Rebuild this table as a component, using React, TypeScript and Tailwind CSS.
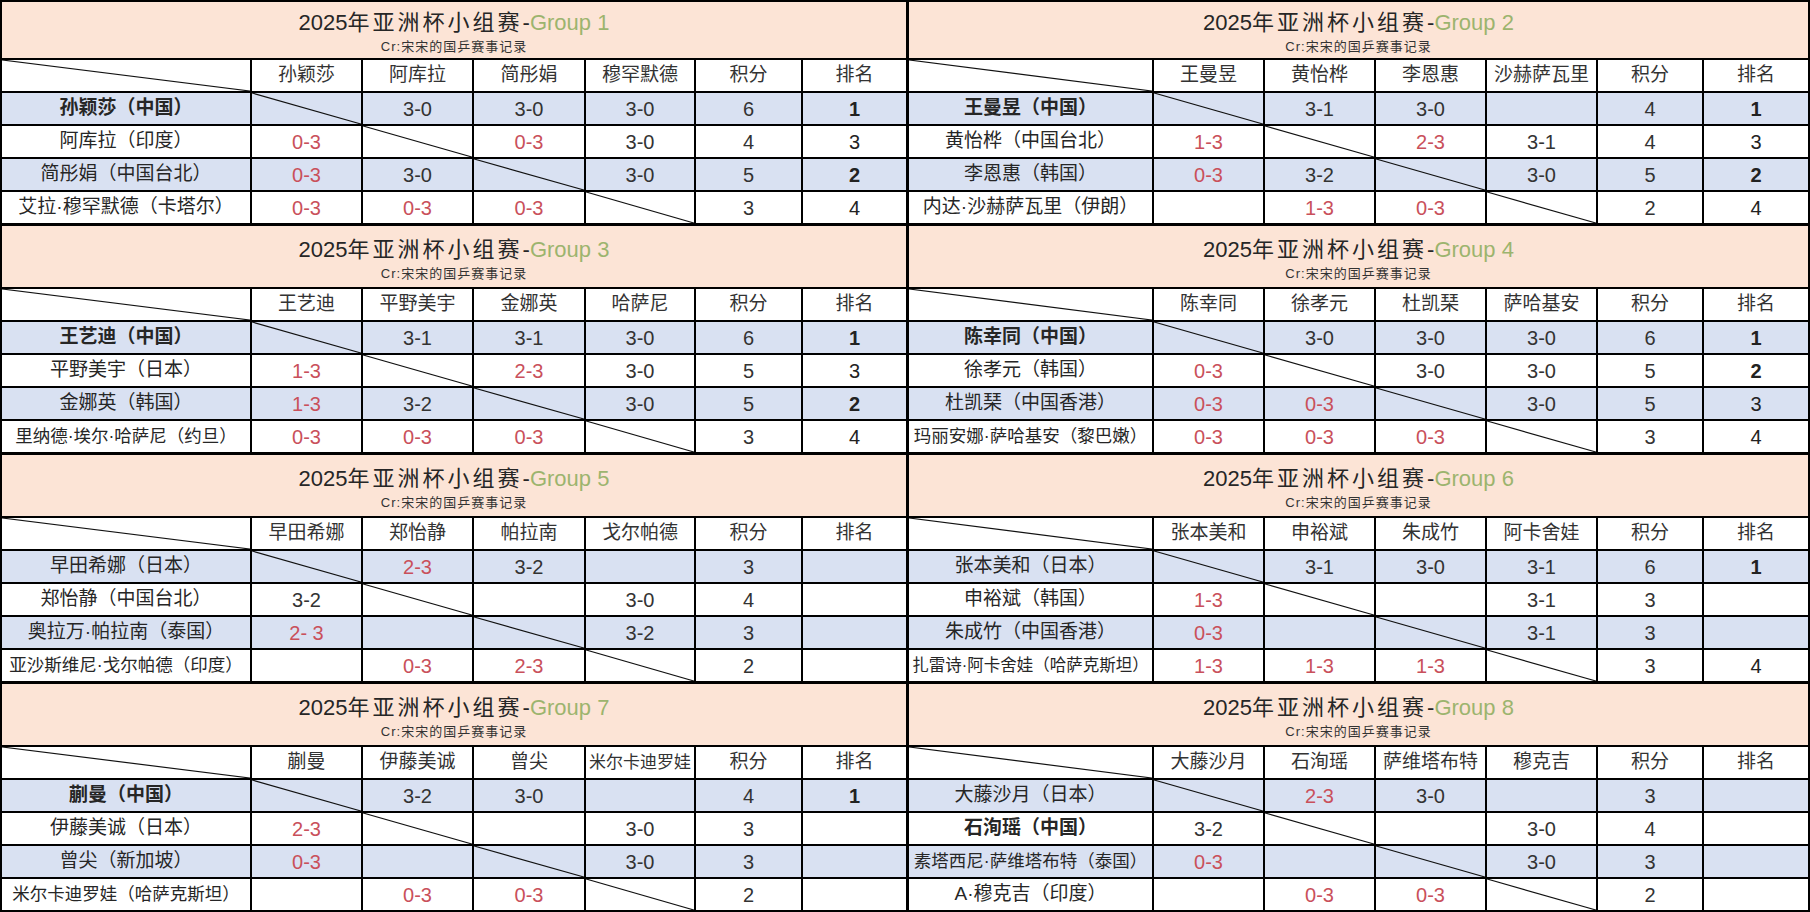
type Row = {
  name: string
  bold?: boolean
  cells: string[]
  pts: string
  rank: string
  rankBold?: boolean
}

type Group = { n: number; cols: string[]; rows: Row[] }

const groups: Group[] = [
  {
    n: 1,
    cols: ['孙颖莎', '阿库拉', '简彤娟', '穆罕默德'],
    rows: [
      { name: '孙颖莎（中国）', bold: true, cells: ['', '3-0', '3-0', '3-0'], pts: '6', rank: '1', rankBold: true },
      { name: '阿库拉（印度）', cells: ['0-3', '', '0-3', '3-0'], pts: '4', rank: '3' },
      { name: '简彤娟（中国台北）', cells: ['0-3', '3-0', '', '3-0'], pts: '5', rank: '2', rankBold: true },
      { name: '艾拉·穆罕默德（卡塔尔）', cells: ['0-3', '0-3', '0-3', ''], pts: '3', rank: '4' },
    ],
  },
  {
    n: 2,
    cols: ['王曼昱', '黄怡桦', '李恩惠', '沙赫萨瓦里'],
    rows: [
      { name: '王曼昱（中国）', bold: true, cells: ['', '3-1', '3-0', ''], pts: '4', rank: '1', rankBold: true },
      { name: '黄怡桦（中国台北）', cells: ['1-3', '', '2-3', '3-1'], pts: '4', rank: '3' },
      { name: '李恩惠（韩国）', cells: ['0-3', '3-2', '', '3-0'], pts: '5', rank: '2', rankBold: true },
      { name: '内达·沙赫萨瓦里（伊朗）', cells: ['', '1-3', '0-3', ''], pts: '2', rank: '4' },
    ],
  },
  {
    n: 3,
    cols: ['王艺迪', '平野美宇', '金娜英', '哈萨尼'],
    rows: [
      { name: '王艺迪（中国）', bold: true, cells: ['', '3-1', '3-1', '3-0'], pts: '6', rank: '1', rankBold: true },
      { name: '平野美宇（日本）', cells: ['1-3', '', '2-3', '3-0'], pts: '5', rank: '3' },
      { name: '金娜英（韩国）', cells: ['1-3', '3-2', '', '3-0'], pts: '5', rank: '2', rankBold: true },
      { name: '里纳德·埃尔·哈萨尼（约旦）', cells: ['0-3', '0-3', '0-3', ''], pts: '3', rank: '4' },
    ],
  },
  {
    n: 4,
    cols: ['陈幸同', '徐孝元', '杜凯琹', '萨哈基安'],
    rows: [
      { name: '陈幸同（中国）', bold: true, cells: ['', '3-0', '3-0', '3-0'], pts: '6', rank: '1', rankBold: true },
      { name: '徐孝元（韩国）', cells: ['0-3', '', '3-0', '3-0'], pts: '5', rank: '2', rankBold: true },
      { name: '杜凯琹（中国香港）', cells: ['0-3', '0-3', '', '3-0'], pts: '5', rank: '3' },
      { name: '玛丽安娜·萨哈基安（黎巴嫩）', cells: ['0-3', '0-3', '0-3', ''], pts: '3', rank: '4' },
    ],
  },
  {
    n: 5,
    cols: ['早田希娜', '郑怡静', '帕拉南', '戈尔帕德'],
    rows: [
      { name: '早田希娜（日本）', cells: ['', '2-3', '3-2', ''], pts: '3', rank: '' },
      { name: '郑怡静（中国台北）', cells: ['3-2', '', '', '3-0'], pts: '4', rank: '' },
      { name: '奥拉万·帕拉南（泰国）', cells: ['2- 3', '', '', '3-2'], pts: '3', rank: '' },
      { name: '亚沙斯维尼·戈尔帕德（印度）', cells: ['', '0-3', '2-3', ''], pts: '2', rank: '' },
    ],
  },
  {
    n: 6,
    cols: ['张本美和', '申裕斌', '朱成竹', '阿卡舍娃'],
    rows: [
      { name: '张本美和（日本）', cells: ['', '3-1', '3-0', '3-1'], pts: '6', rank: '1', rankBold: true },
      { name: '申裕斌（韩国）', cells: ['1-3', '', '', '3-1'], pts: '3', rank: '' },
      { name: '朱成竹（中国香港）', cells: ['0-3', '', '', '3-1'], pts: '3', rank: '' },
      { name: '扎雷诗·阿卡舍娃（哈萨克斯坦）', cells: ['1-3', '1-3', '1-3', ''], pts: '3', rank: '4' },
    ],
  },
  {
    n: 7,
    cols: ['蒯曼', '伊藤美诚', '曾尖', '米尔卡迪罗娃'],
    rows: [
      { name: '蒯曼（中国）', bold: true, cells: ['', '3-2', '3-0', ''], pts: '4', rank: '1', rankBold: true },
      { name: '伊藤美诚（日本）', cells: ['2-3', '', '', '3-0'], pts: '3', rank: '' },
      { name: '曾尖（新加坡）', cells: ['0-3', '', '', '3-0'], pts: '3', rank: '' },
      { name: '米尔卡迪罗娃（哈萨克斯坦）', cells: ['', '0-3', '0-3', ''], pts: '2', rank: '' },
    ],
  },
  {
    n: 8,
    cols: ['大藤沙月', '石洵瑶', '萨维塔布特', '穆克吉'],
    rows: [
      { name: '大藤沙月（日本）', cells: ['', '2-3', '3-0', ''], pts: '3', rank: '' },
      { name: '石洵瑶（中国）', bold: true, cells: ['3-2', '', '', '3-0'], pts: '4', rank: '' },
      { name: '素塔西尼·萨维塔布特（泰国）', cells: ['0-3', '', '', '3-0'], pts: '3', rank: '' },
      { name: 'A·穆克吉（印度）', cells: ['', '0-3', '0-3', ''], pts: '2', rank: '' },
    ],
  },
]

// rough width in "CJK units" so long names get a smaller size
function units(s: string) {
  let u = 0
  for (const ch of s) u += ch === '·' ? 0.3 : /[A-Za-z0-9]/.test(ch) ? 0.6 : 1
  return u
}

function nameSize(s: string) {
  const u = units(s)
  if (u >= 14) return 'text-[16.5px]'
  if (u >= 12) return 'text-[17.5px]'
  return 'text-[19px]'
}

function Diagonal() {
  return (
    <svg className="absolute inset-0 w-full h-full" viewBox="0 0 100 100" preserveAspectRatio="none">
      <line x1="0" y1="0" x2="100" y2="100" stroke="#111" strokeWidth="1.2" vectorEffect="non-scaling-stroke" />
    </svg>
  )
}

function GroupTable({ g, first, right }: { g: Group; first: boolean; right: boolean }) {
  const cols = right
    ? 'grid-cols-[243px_109px_109px_109px_109px_104px_104px]'
    : 'grid-cols-[248px_109px_109px_110px_108px_105px_103px]'

  return (
    <div className="flex flex-col gap-[2px]">
      <div
        className={`${first ? 'h-[56px] pt-[9px]' : 'h-[61px] pt-[12px]'} bg-[#fce4d6] flex flex-col items-center text-[#262626]`}
      >
        <div className="text-[22px] leading-[24px] whitespace-nowrap">
          <span>2025</span>
          <span className="tracking-[3px]">年亚洲杯小组赛</span>
          <span>-</span>
          <span className="text-[#9cb46e]">Group {g.n}</span>
        </div>
        <div className="mt-[4px] text-[13px] leading-[15px] tracking-[1px] text-[#333]">Cr:宋宋的国乒赛事记录</div>
      </div>

      <div className={`grid ${cols} auto-rows-[31px] gap-[2px]`}>
        <div className="relative bg-white">
          <Diagonal />
        </div>
        {g.cols.map((c) => (
          <div
            key={c}
            className={`bg-white flex items-center justify-center whitespace-nowrap text-[#333] ${
              c.length > 5 ? 'text-[17px]' : 'text-[19px]'
            }`}
          >
            {c}
          </div>
        ))}
        <div className="bg-white flex items-center justify-center text-[19px] text-[#333]">积分</div>
        <div className="bg-white flex items-center justify-center text-[19px] text-[#333]">排名</div>

        {g.rows.map((r, i) => {
          const bg = i % 2 === 0 ? 'bg-[#d9e1f2]' : 'bg-white'
          return (
            <div key={r.name} className="contents">
              <div
                className={`${bg} flex items-center justify-center whitespace-nowrap text-[#262626] ${nameSize(r.name)} ${
                  r.bold ? 'font-bold' : ''
                }`}
              >
                {r.name}
              </div>
              {r.cells.map((s, j) => (
                <div
                  key={j}
                  className={`${bg} relative flex items-center justify-center text-[20px] whitespace-pre ${
                    s.startsWith('3') ? 'text-[#333]' : 'text-[#c9505b]'
                  }`}
                >
                  {i === j ? <Diagonal /> : s}
                </div>
              ))}
              <div className={`${bg} flex items-center justify-center text-[20px] text-[#333]`}>{r.pts}</div>
              <div
                className={`${bg} flex items-center justify-center text-[20px] text-[#222] ${
                  r.rankBold ? 'font-bold' : ''
                }`}
              >
                {r.rank}
              </div>
            </div>
          )
        })}
      </div>
    </div>
  )
}

export default function App() {
  return (
    <div className="w-[1810px] h-[912px] bg-black p-[2px] grid grid-cols-[904px_899px] grid-rows-[221px_226px_226px_226px] gap-[3px] overflow-hidden font-['Liberation_Sans','Noto_Sans_CJK_SC',sans-serif]">
      {groups.map((g, idx) => (
        <GroupTable key={g.n} g={g} first={idx < 2} right={idx % 2 === 1} />
      ))}
    </div>
  )
}
